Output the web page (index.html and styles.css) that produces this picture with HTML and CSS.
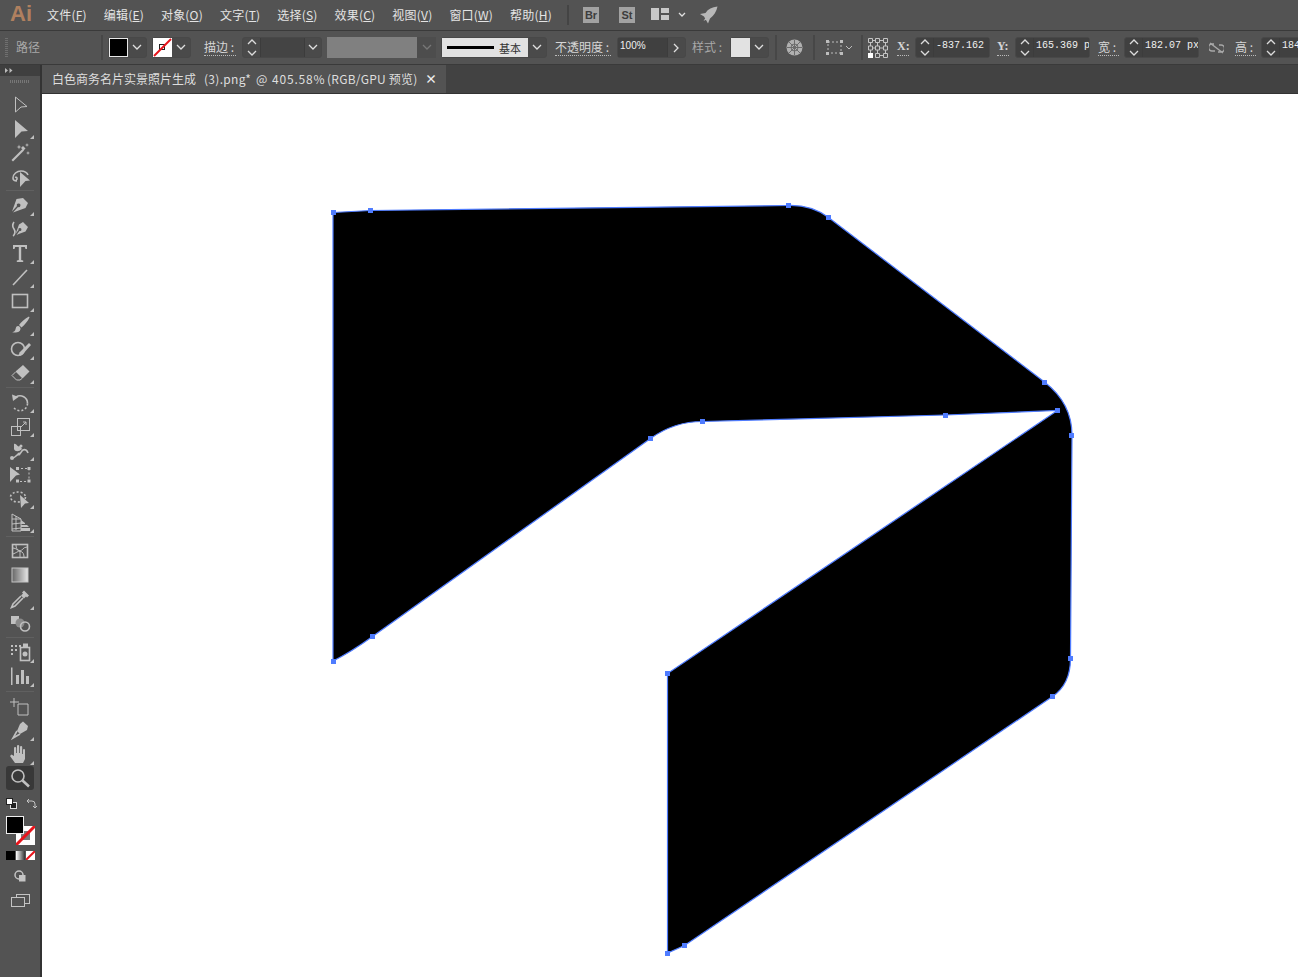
FILE: index.html
```html
<!DOCTYPE html>
<html lang="zh-CN">
<head>
    <meta charset="UTF-8">
    <title>Adobe Illustrator</title>
    <link rel="stylesheet" href="styles.css">
</head>
<body>
    <!-- menu bar -->
    <header class="menu-bar">
        <span class="app-logo">Ai</span>
        <nav class="menu-list">
            <span>文件(<u>F</u>)</span>
            <span>编辑(<u>E</u>)</span>
            <span>对象(<u>O</u>)</span>
            <span>文字(<u>T</u>)</span>
            <span>选择(<u>S</u>)</span>
            <span>效果(<u>C</u>)</span>
            <span>视图(<u>V</u>)</span>
            <span>窗口(<u>W</u>)</span>
            <span>帮助(<u>H</u>)</span>
        </nav>
        <i class="menu-divider"></i>
        <span class="bridge-btn">Br</span>
        <span class="bridge-btn stock-btn">St</span>
        <svg class="layout-icon" width="18" height="12" viewBox="0 0 18 12"><path d="M0 0h8v12H0zM10 0h8v5h-8zM10 7h8v5h-8z"/></svg>
        <svg class="chev layout-chev" width="8" height="6" viewBox="0 0 8 6"><path d="M1 1l3 3 3-3"/></svg>
        <svg class="rocket-icon" width="18" height="18" viewBox="0 0 18 18"><path d="M17.500.5C12 1 8 3 5.500 7L0 8l4 2.500L8 17.500l2-5c4-3 6.500-7 7.500-12zM6 11l-2.500 4 4-2z"/></svg>
    </header>

    <!-- control bar -->
    <section class="control-bar">
        <span class="grip"></span>
        <span class="path-label">路径</span>
        <i class="bar-divider divider-a"></i>

        <div class="combo fill-combo">
            <span class="swatch swatch-black"></span>
            <span class="combo-arrow"><svg class="chev" width="10" height="7" viewBox="0 0 10 7"><path d="M1 1l4 4 4-4"/></svg></span>
        </div>
        <div class="combo stroke-combo">
            <span class="swatch swatch-none">
                <svg width="19" height="19" viewBox="0 0 19 19"><rect x="6.500" y="6.500" width="5" height="5" fill="none" stroke="#222"/><path d="M1 18L18 1" stroke="#e8141b" stroke-width="2"/></svg>
            </span>
            <span class="combo-arrow"><svg class="chev" width="10" height="7" viewBox="0 0 10 7"><path d="M1 1l4 4 4-4"/></svg></span>
        </div>

        <span class="field-label stroke-label">描边 :</span>
        <div class="combo weight-combo">
            <span class="spinner"><svg width="10" height="17" viewBox="0 0 10 17"><path d="M1 5l4-4 4 4M1 12l4 4 4-4"/></svg></span>
            <span class="weight-value"></span>
            <span class="combo-arrow"><svg class="chev" width="10" height="7" viewBox="0 0 10 7"><path d="M1 1l4 4 4-4"/></svg></span>
        </div>

        <div class="dash-combo">
            <span class="dash-preview"></span>
            <span class="combo-arrow"><svg class="chev chev-off" width="10" height="7" viewBox="0 0 10 7"><path d="M1 1l4 4 4-4"/></svg></span>
        </div>

        <div class="combo brush-combo">
            <span class="brush-preview"><i class="brush-line"></i><em>基本</em></span>
            <span class="combo-arrow"><svg class="chev" width="10" height="7" viewBox="0 0 10 7"><path d="M1 1l4 4 4-4"/></svg></span>
        </div>

        <span class="field-label opacity-label">不透明度 :</span>
        <div class="combo opacity-combo">
            <span class="num-value opacity-value">100%</span>
            <span class="combo-arrow"><svg class="chev" width="7" height="10" viewBox="0 0 7 10"><path d="M1 1l4 4-4 4"/></svg></span>
        </div>

        <span class="style-label">样式 :</span>
        <div class="combo style-combo">
            <span class="swatch swatch-style"></span>
            <span class="combo-arrow"><svg class="chev" width="10" height="7" viewBox="0 0 10 7"><path d="M1 1l4 4 4-4"/></svg></span>
        </div>

        <i class="bar-divider divider-b"></i>
        <svg class="globe-icon" width="17" height="17" viewBox="0 0 17 17"><circle cx="8.500" cy="8.500" r="8" fill="#b0b0b0"/><path d="M8.500 1v15M1 8.500h15M3 3l11 11M14 3L3 14" stroke="#6c6c6c" stroke-width="1"/><circle cx="8.500" cy="8.500" r="3.500" fill="none" stroke="#6c6c6c"/></svg>
        <i class="bar-divider divider-c"></i>
        <svg class="transform-icon" width="28" height="15" viewBox="0 0 28 15"><path d="M2 2h13v11H2z" fill="none" stroke="#bdbdbd" stroke-dasharray="2 2"/><path d="M0 0h3v3H0zM14 0h3v3h-3zM0 12h3v3H0zM14 12h3v3h-3z" fill="#bdbdbd"/><path d="M20 6l3 3 3-3" fill="none" stroke="#bdbdbd"/></svg>
        <i class="bar-divider divider-d"></i>
        <svg class="ref-icon" width="20" height="20" viewBox="0 0 20 20" fill="none" stroke="#c4c4c4"><path d="M.5.500h4v4h-4zM7.500.500h4v4h-4zM15.500.500h4v4h-4zM.5 8h4v4h-4zM7.500 8h4v4h-4zM15.500 8h4v4h-4zM7.500 15.500h4v4h-4zM15.500 15.500h4v4h-4zM4.500 2.500h3M11.500 2.500h4M4.500 10h3M11.500 10h4M11.500 17.500h4M2.500 4.500V8M9.500 4.500V8M17.500 4.500V8M2.500 12v3M9.500 12v3.500M17.500 12v3.500"/><path d="M0 15h5v5H0z" fill="#fff" stroke="none"/></svg>

        <span class="field-label x-label">X:</span>
        <div class="combo coord-combo x-combo">
            <span class="spinner"><svg width="10" height="17" viewBox="0 0 10 17"><path d="M1 5l4-4 4 4M1 12l4 4 4-4"/></svg></span>
            <span class="num-value">-837.162</span>
        </div>
        <span class="field-label y-label">Y:</span>
        <div class="combo coord-combo y-combo">
            <span class="spinner"><svg width="10" height="17" viewBox="0 0 10 17"><path d="M1 5l4-4 4 4M1 12l4 4 4-4"/></svg></span>
            <span class="num-value">165.369 px</span>
        </div>
        <span class="field-label w-label">宽 :</span>
        <div class="combo coord-combo w-combo">
            <span class="spinner"><svg width="10" height="17" viewBox="0 0 10 17"><path d="M1 5l4-4 4 4M1 12l4 4 4-4"/></svg></span>
            <span class="num-value">182.07 px</span>
        </div>
        <svg class="link-icon" width="15" height="12" viewBox="0 0 15 12" fill="none" stroke="#a8a8a8" stroke-width="1.500"><path d="M5 2H3a2.500 2.500 0 0 0 0 7h3M10 3h2a2.500 2.500 0 0 1 0 7H9M1 1l13 10"/></svg>
        <span class="field-label h-label">高 :</span>
        <div class="combo coord-combo h-combo">
            <span class="spinner"><svg width="10" height="17" viewBox="0 0 10 17"><path d="M1 5l4-4 4 4M1 12l4 4 4-4"/></svg></span>
            <span class="num-value">184.5 px</span>
        </div>
    </section>

    <div class="workspace">
        <!-- tools panel -->
        <aside class="tools">
            <div class="tools-head"><svg width="8" height="5" viewBox="0 0 8 5"><path d="M0 0l3 2.500L0 5zM4.500 0l3 2.500-3 2.500z"/></svg></div>
            <div class="tools-grip"></div>

            <div class="tool"><svg viewBox="0 0 24 24"><path class="line" d="M7.500 5l11.500 9.500-6 .5-5.500 5z"/></svg></div>
            <div class="tool more"><svg viewBox="0 0 24 24"><path d="M7 4l13 11-6.500.5L7 22z"/></svg></div>
            <div class="tool"><svg viewBox="0 0 24 24"><path d="M5 21.500l-1.500-1.500 11-11 1.500 1.500z"/><path d="M11 4.500l.6 1.900 1.900.6-1.900.6-.6 1.900-.6-1.900-1.900-.6 1.900-.6zM19 3l.5 1.500 1.500.5-1.500.5-.5 1.500-.5-1.500-1.500-.5 1.500-.5zM20 11l.5 1.500 1.500.5-1.500.5-.5 1.500-.5-1.500-1.500-.5 1.500-.5z"/><path d="M15 6l2.500 2.500-2 2L13 8z"/></svg></div>
            <div class="tool"><svg viewBox="0 0 24 24"><path class="line thick" d="M9 17c-2 0-4-1-4-3 0-4 4-7 8-7 3.500 0 6 1.500 7 4M7 13.500c2-1 3 1.500 1 2.500"/><path d="M12 8l10 8.500-4.500.5-5.500 6z"/></svg></div>
            <i class="tool-sep"></i>

            <div class="tool more"><svg viewBox="0 0 24 24"><path d="M15 5l5 5-2.500 5-7 2.500-5.500 2 5-5.500a1.800 1.800 0 1 0-1-1L4 18.500l2-5.500 2.500-7z"/></svg></div>
            <div class="tool"><svg viewBox="0 0 24 24"><path d="M15 5l5 5-2.500 4.500-5.500 2-3.500 1.500 3-4a1.500 1.500 0 1 0-1-1l-3 4 1.500-4 2-5.500z"/><path class="line thick" d="M6 5c-2 3-1.500 5 0 7s1 6-1 7"/></svg></div>
            <div class="tool more"><svg viewBox="0 0 24 24"><path d="M5 4h14v4h-1.500l-.7-2H13.200v13l2 .6V21H8.800v-1.400l2-.6V6H7.200l-.7 2H5z"/></svg></div>
            <div class="tool more"><svg viewBox="0 0 24 24"><path class="line thick" d="M5 20L19 5"/></svg></div>
            <div class="tool more"><svg viewBox="0 0 24 24"><rect class="line thick" x="4.500" y="5.500" width="15" height="13" fill="#6a6a6a"/></svg></div>
            <div class="tool more"><svg viewBox="0 0 24 24"><path d="M21 3.500c-4 2-8 5.500-10 8.500l2.500 2.500c3-2.500 6-6 8-10zM10 13c-2.500 0-2 3-3 4.500-.6 1-2 1.500-3 1.500 3 1 8 1 8.500-3 .2-1.500-1-3-2.500-3z"/></svg></div>
            <div class="tool more"><svg viewBox="0 0 24 24"><circle class="line thick" cx="10" cy="12" r="6.500"/><path d="M21 6l2 2-9 10-3.500 1 1-3.500z"/></svg></div>
            <div class="tool more"><svg viewBox="0 0 24 24"><path d="M15 4l6.500 6.500-7 7-7-7z"/><path class="line" d="M7.500 11l-3.500 3.500 4.500 4.500h3.500l2-1.500"/></svg></div>
            <i class="tool-sep"></i>

            <div class="tool more"><svg viewBox="0 0 24 24"><path class="line thick dashed" d="M19.500 13.500a7.500 7.500 0 0 1-14 3.500"/><path class="line thick" d="M19.500 13.500A7.500 7.500 0 0 0 8 7"/><path d="M4 4.500l6.500 2.500-5.500 4z"/></svg></div>
            <div class="tool more"><svg viewBox="0 0 24 24"><rect class="line" x="3.500" y="12.500" width="9" height="9"/><rect class="line" x="9.500" y="4.500" width="12" height="12"/><path class="line" d="M13 13l5-5M15 8h3v3"/></svg></div>
            <div class="tool more"><svg viewBox="0 0 24 24"><path class="line thick" d="M5 20c3-1 3-3 6-4 3-1 2-3 4-4s4 0 5 3"/><path d="M6 6c3-1 3 4 6 2l2 3c-3 3-7 3-8 0z"/><circle cx="4" cy="20" r="2"/><circle cx="13" cy="8" r="1.500"/><circle cx="11" cy="16" r="1.500"/></svg></div>
            <div class="tool"><svg viewBox="0 0 24 24"><path d="M2 5l10 7.500-4 1L2 20z"/><path class="line dashed" d="M9 6.500h12v13H7"/><path d="M8 5h3v3H8zM19.500 5h3v3h-3zM19.500 17.500h3v3h-3zM8 17.500h3v3H8z"/></svg></div>
            <div class="tool more"><svg viewBox="0 0 24 24"><ellipse class="line thick dashed" cx="10" cy="11" rx="7.500" ry="5"/><path d="M12 9l9 8-4 .5-4 4.500z"/></svg></div>
            <div class="tool more"><svg viewBox="0 0 24 24"><path class="line" d="M4 21V4l9 5v12zM4 9h9M4 14l9-1M4 19l9-1M8 6v14"/><path d="M13 10l4 3v1h-4zM13 15h6l2 2h-8zM13 18h9v3h-9z"/></svg></div>
            <i class="tool-sep"></i>

            <div class="tool"><svg viewBox="0 0 24 24"><rect class="line thick" x="4.500" y="5.500" width="15" height="13"/><path class="line" d="M5 9c3 0 5 3 7 3s3-4 7-4M12 12v6M8 6c0 3 1 5 4 6M16 18c0-3-1-5-4-6M5 15c3-1 5-3 7-3"/></svg></div>
            <div class="tool"><svg viewBox="0 0 24 24"><defs><linearGradient id="grad-tool"><stop offset="0" stop-color="#666"/><stop offset="1" stop-color="#e6e6e6"/></linearGradient></defs><rect x="4" y="5" width="16" height="14" fill="url(#grad-tool)" stroke="#c4c4c4"/></svg></div>
            <div class="tool more"><svg viewBox="0 0 24 24"><path d="M16 3.500l5 5-2 2-1-1-2 2-3-3 2-2-1-1z"/><path class="line thick" d="M13 9l-8 8-1.500 3.500L7 19l8-8"/></svg></div>
            <div class="tool"><svg viewBox="0 0 24 24"><rect x="3" y="5" width="8" height="8"/><circle cx="12" cy="12" r="4.500" fill="#8a8a8a"/><circle class="line thick" cx="17" cy="15.500" r="4.500" fill="#535353"/></svg></div>
            <i class="tool-sep"></i>

            <div class="tool more"><svg viewBox="0 0 24 24"><path d="M3 5h2v2H3zM7 5h2v2H7zM11 5h2v2h-2zM3 9h2v2H3zM7 9h2v2H7zM3 13h2v2H3zM15 3.500h5V7h-5z"/><rect class="line thick" x="12.500" y="7.500" width="9" height="13"/><circle cx="17" cy="14" r="2.500"/></svg></div>
            <div class="tool more"><svg viewBox="0 0 24 24"><path d="M3 3.500h1.500V21H3zM8 11h3v9H8zM13 6h3v14h-3zM18 12h3v8h-3z"/></svg></div>
            <i class="tool-sep tool-sep-wide"></i>

            <div class="tool"><svg viewBox="0 0 24 24"><path d="M10 10h10v11H10z" fill="none" stroke="#c0c0c0"/><path class="line" d="M6 4v9M2 8h9"/></svg></div>
            <div class="tool more"><svg viewBox="0 0 24 24"><path d="M15 3.500l5 4.500-1 4-7 4-3-3 3-7z"/><path class="line thick" d="M9 13l-4 7 7-4"/></svg></div>
            <div class="tool more"><svg viewBox="0 0 24 24"><path d="M7 21l-5-7 1.500-1.500L6 14V6a1 1 0 0 1 2.200 0v5h.8V4a1 1 0 0 1 2.200 0v7h.8V5a1 1 0 0 1 2.200 0v7h.8V8a1 1 0 0 1 2 0v9l-2 4z"/></svg></div>
            <div class="tool tool-active"><svg viewBox="0 0 24 24"><circle class="line thick" cx="10" cy="10" r="6"/><path class="line heavy" d="M14.500 14.500L21 20.500"/></svg></div>

            <!-- fill and stroke -->
            <div class="color-tools">
                <div class="default-row">
                    <svg width="11" height="11" viewBox="0 0 11 11"><rect x="4.500" y="4.500" width="6" height="6" fill="#222" stroke="#ddd"/><rect x=".5" y=".5" width="6" height="6" fill="#fff" stroke="#222"/></svg>
                    <svg width="11" height="11" viewBox="0 0 11 11" fill="none" stroke="#c4c4c4"><path d="M1 3h5a3 3 0 0 1 3 3v4M3 1L1 3l2 2M7 8l2 2 2-2"/></svg>
                </div>
                <div class="fill-stroke">
                    <span class="big-stroke"><svg width="19" height="19" viewBox="0 0 19 19"><path d="M5 5h9v9H5z" fill="#7a7a7a"/><path d="M0 19L19 0" stroke="#e8141b" stroke-width="3"/></svg></span>
                    <span class="big-fill"></span>
                </div>
                <div class="mode-row">
                    <span class="mode mode-color"></span>
                    <span class="mode mode-grad"></span>
                    <span class="mode mode-none"><svg width="9" height="9" viewBox="0 0 9 9"><path d="M0 9l9-9" stroke="#e8141b" stroke-width="2"/></svg></span>
                </div>
                <svg class="draw-mode" width="12" height="12" viewBox="0 0 12 12"><circle cx="5" cy="5" r="4" fill="none" stroke="#c4c4c4" stroke-width="1.500"/><rect x="5" y="5" width="6.500" height="6.500" fill="#c4c4c4"/></svg>
                <svg class="screen-mode" width="19" height="13" viewBox="0 0 19 13" fill="#535353" stroke="#c4c4c4"><rect x="5.500" y=".5" width="13" height="9"/><rect x=".5" y="3.500" width="13" height="9"/></svg>
            </div>
        </aside>

        <main class="doc-area">
            <div class="tab-bar">
                <div class="doc-tab">
                    <span class="tab-name">白色商务名片实景照片生成</span>
                    <span class="tab-file">(3).png*</span>
                    <span class="tab-at">@</span>
                    <span class="tab-zoom">405.58%</span>
                    <span class="tab-mode">(RGB/GPU 预览)</span>
                    <b class="tab-close">×</b>
                </div>
            </div>
            <div class="canvas">
                <svg class="artboard" viewBox="42 94 1256 883">
                    <path class="shape" d="M333 212.500L370.500 210.500L788.500 205.500C805 205 817 209 828.500 217.500L1044.500 382C1060 394 1072 410 1072 435L1070.500 658.500C1070.500 675 1065 688 1052.500 696.500L684.500 945.500L667.500 953V673.500L1057.500 410.500L945.500 415L702.500 421.500C685 421.500 668 426 650.500 438.500L372.500 636.500C358 647 345 655 333 661Z"/>
                    <g class="anchors">
                        <rect x="331" y="210" width="5" height="5"/>
                        <rect x="368" y="208" width="5" height="5"/>
                        <rect x="786" y="203" width="5" height="5"/>
                        <rect x="826" y="215" width="5" height="5"/>
                        <rect x="1042" y="380" width="5" height="5"/>
                        <rect x="1055" y="408" width="5" height="5"/>
                        <rect x="1069" y="433" width="5" height="5"/>
                        <rect x="1068" y="656" width="5" height="5"/>
                        <rect x="1050" y="694" width="5" height="5"/>
                        <rect x="682" y="943" width="5" height="5"/>
                        <rect x="665" y="951" width="5" height="5"/>
                        <rect x="665" y="671" width="5" height="5"/>
                        <rect x="943" y="413" width="5" height="5"/>
                        <rect x="700" y="419" width="5" height="5"/>
                        <rect x="648" y="436" width="5" height="5"/>
                        <rect x="370" y="634" width="5" height="5"/>
                        <rect x="331" y="659" width="5" height="5"/>
                    </g>
                </svg>
            </div>
        </main>
    </div>
</body>
</html>
```

FILE: styles.css
```css
* {
    margin: 0;
    padding: 0;
    box-sizing: border-box;
}

html, body {
    height: 100%;
    overflow: hidden;
}

body {
    display: flex;
    flex-direction: column;
    font-family: "Noto Sans CJK SC", "Open Sans", sans-serif;
    font-size: 12px;
    background-color: #535353;
    color: #e4e4e4;
}

i, em {
    font-style: normal;
}

svg {
    display: block;
    flex-shrink: 0;
}

/* Menu bar */
.menu-bar {
    display: flex;
    align-items: center;
    height: 31px;
    flex-shrink: 0;
    padding-left: 10px;
    border-bottom: 1px solid #3a3a3a;
}

.app-logo {
    width: 37px;
    font-family: "Liberation Sans", sans-serif;
    font-size: 22px;
    font-weight: bold;
    color: #b0805f;
    margin-top: -2px;
}

.menu-list {
    display: flex;
    gap: 17px;
    width: 520px;
    margin-top: -2px;
}

.menu-list span {
    white-space: nowrap;
    letter-spacing: .2px;
}

.menu-divider {
    width: 2px;
    height: 20px;
    background-color: #444;
}

.bridge-btn {
    width: 16px;
    height: 16px;
    margin-left: 14px;
    background-color: #a2a2a2;
    color: #3d3d3d;
    font-family: "Liberation Sans", sans-serif;
    font-size: 11px;
    font-weight: bold;
    line-height: 17px;
    text-align: center;
}

.stock-btn {
    margin-left: 20px;
}

.layout-icon {
    margin: -2px 0 0 16px;
    fill: #c8c8c8;
}

.chev {
    fill: none;
    stroke: #e0e0e0;
    stroke-width: 1.3;
}

.chev-off {
    stroke: #777;
}

.layout-chev {
    margin-left: 9px;
}

.rocket-icon {
    margin-left: 14px;
    fill: #b8b8b8;
}

/* Control bar */
.control-bar {
    display: flex;
    align-items: center;
    height: 34px;
    flex-shrink: 0;
    padding-left: 5px;
    overflow: hidden;
    white-space: nowrap;
    border-bottom: 1px solid #3a3a3a;
}

.control-bar > * {
    flex-shrink: 0;
}

.grip {
    width: 3px;
    height: 19px;
    background: repeating-linear-gradient(#6f6f6f 0 1px, transparent 1px 2px);
}

.path-label {
    margin: -3px 0 0 8px;
    color: #a8a8a8;
}

.bar-divider {
    width: 2px;
    height: 25px;
    background-color: #474747;
}

.divider-a { margin-left: 61px; }
.divider-b { margin-left: 6px; }
.divider-c { margin-left: 10px; }
.divider-d { margin-left: 7px; }

.combo {
    display: flex;
    align-items: center;
    height: 21px;
    border: 1px solid #484848;
    border-radius: 3px;
    background-color: #4a4a4a;
}

.combo-arrow {
    display: flex;
    align-items: center;
    justify-content: center;
    flex: 1;
    height: 100%;
}

.swatch {
    display: block;
    width: 19px;
    height: 19px;
    flex-shrink: 0;
    border: 1px solid #e8e8e8;
}

.swatch-black { background-color: #000; }
.swatch-none { background-color: #fff; border: 0; }
.swatch-style { background-color: #e2e2e2; border: 0; }

.fill-combo {
    width: 39px;
    margin-left: 5px;
}

.stroke-combo {
    width: 39px;
    margin-left: 5px;
}

.field-label {
    margin-top: -1px;
    padding-bottom: 1px;
    border-bottom: 1px dotted #bbb;
    color: #d6d6d6;
    line-height: 15px;
}

.stroke-label {
    width: 32px;
    margin-left: 13px;
}

.weight-combo {
    width: 80px;
    margin-left: 6px;
}

.spinner {
    display: flex;
    align-items: center;
    justify-content: center;
    width: 18px;
    height: 100%;
    flex-shrink: 0;
    border-right: 1px solid #3c3c3c;
}

.spinner path {
    fill: none;
    stroke: #dcdcdc;
    stroke-width: 1.3;
}

.weight-value {
    width: 44px;
    height: 100%;
    background-color: #444;
    border-right: 1px solid #3c3c3c;
}

.dash-combo {
    display: flex;
    align-items: center;
    width: 109px;
    height: 21px;
    margin-left: 5px;
    background-color: #4d4d4d;
}

.dash-preview {
    width: 90px;
    height: 100%;
    background-color: #808080;
}

.brush-combo {
    width: 106px;
    margin-left: 5px;
}

.brush-preview {
    display: flex;
    align-items: center;
    width: 86px;
    height: 19px;
    flex-shrink: 0;
    padding-left: 5px;
    background-color: #e2e2e2;
    color: #333;
    font-size: 11px;
}

.brush-line {
    width: 47px;
    height: 3px;
    margin-right: 5px;
    background-color: #000;
}

.opacity-label {
    width: 56px;
    margin-left: 8px;
}

.opacity-combo {
    width: 69px;
    margin-left: 6px;
}

.num-value {
    display: block;
    flex-shrink: 0;
    overflow: hidden;
    height: 100%;
    padding-left: 2px;
    background-color: #404040;
    color: #f0f0f0;
    font-family: "Liberation Mono", monospace;
    font-size: 10px;
    line-height: 16px;
}

.opacity-value {
    width: 50px;
    font-family: "Liberation Sans", sans-serif;
    border-right: 1px solid #3c3c3c;
}

.style-label {
    width: 32px;
    margin: -2px 0 0 6px;
    color: #a8a8a8;
}

.style-combo {
    width: 39px;
    margin-left: 6px;
}

.globe-icon {
    margin-left: 9px;
}

.transform-icon {
    margin-left: 11px;
}

.ref-icon {
    margin-left: 5px;
}

.x-label {
    width: 12px;
    margin-left: 9px;
    font-family: "Liberation Serif", serif;
    font-weight: bold;
}

.y-label {
    width: 12px;
    margin-left: 7px;
    font-family: "Liberation Serif", serif;
    font-weight: bold;
}

.w-label, .h-label {
    width: 21px;
    margin-left: 8px;
}

.coord-combo {
    background-color: #404040;
}

.coord-combo .num-value {
    flex: 1;
    min-width: 0;
}

.x-combo, .y-combo {
    width: 75px;
    margin-left: 6px;
}

.w-combo {
    width: 75px;
    margin-left: 5px;
}

.h-combo {
    width: 75px;
    margin-left: 5px;
}

.link-icon {
    margin-left: 10px;
}

.h-label {
    margin-left: 11px;
}

/* Tools panel and document area */
.workspace {
    display: flex;
    flex: 1;
    min-height: 0;
}

.tools {
    display: flex;
    flex-direction: column;
    width: 42px;
    flex-shrink: 0;
    border-right: 2px solid #333;
}

.tools-head {
    display: flex;
    align-items: center;
    height: 11px;
    padding-left: 5px;
    background-color: #3f3f3f;
    fill: #bbb;
}

.tools-grip {
    width: 20px;
    height: 16px;
    margin: 0 0 0 10px;
    background: repeating-linear-gradient(90deg, #777 0 1px, transparent 1px 2px) center 4px / 100% 3px no-repeat;
}

.tool {
    position: relative;
    display: flex;
    justify-content: center;
    align-items: center;
    width: 28px;
    height: 24px;
    margin-left: 6px;
    flex-shrink: 0;
}

.tool svg {
    width: 24px;
    height: 24px;
    fill: #c0c0c0;
}

.tool .line {
    fill: none;
    stroke: #c0c0c0;
    stroke-width: 1;
}

.tool .thick {
    stroke-width: 1.6;
}

.tool .heavy {
    stroke-width: 2.6;
}

.tool .dashed {
    stroke-dasharray: 2 2;
}

.tool.more::after {
    content: '';
    position: absolute;
    right: 0;
    bottom: 1px;
    border-style: solid;
    border-width: 0 0 4px 4px;
    border-color: transparent transparent #c0c0c0 transparent;
}

.tool-active {
    border-radius: 3px;
    background-color: #383838;
}

.tool-sep {
    height: 1px;
    margin: 2px 6px;
    flex-shrink: 0;
    background-color: #606060;
}

.tool-sep-wide {
    margin: 3px 6px 2px;
}

.color-tools {
    display: flex;
    flex-direction: column;
    padding: 8px 0 0 6px;
}

.default-row {
    display: flex;
    gap: 9px;
}

.fill-stroke {
    position: relative;
    width: 29px;
    height: 29px;
    margin-top: 7px;
}

.big-fill {
    position: absolute;
    left: 0;
    top: 0;
    width: 18px;
    height: 18px;
    border: 1px solid #eee;
    background-color: #000;
}

.big-stroke {
    position: absolute;
    right: 0;
    bottom: 0;
    width: 19px;
    height: 19px;
    background-color: #fff;
}

.mode-row {
    display: flex;
    gap: 1px;
    margin-top: 6px;
}

.mode {
    width: 9px;
    height: 9px;
}

.mode-color { background-color: #000; }
.mode-grad { background: linear-gradient(90deg, #fff, #333); }
.mode-none { background-color: #fff; }

.draw-mode {
    margin: 10px 0 0 8px;
}

.screen-mode {
    margin: 12px 0 0 5px;
}

.doc-area {
    display: flex;
    flex-direction: column;
    flex: 1;
    min-width: 0;
}

.tab-bar {
    height: 29px;
    flex-shrink: 0;
    background-color: #424242;
    border-bottom: 1px solid #333;
}

.doc-tab {
    display: flex;
    align-items: center;
    width: 404px;
    height: 28px;
    padding: 0 0 2px 10px;
    background-color: #535353;
    color: #dedede;
    white-space: nowrap;
}

.tab-file {
    width: 46px;
    margin-left: 8px;
    letter-spacing: .3px;
}

.tab-at {
    margin-left: 6px;
    width: 12px;
}

.tab-zoom {
    width: 49px;
    margin-left: 4px;
    letter-spacing: .8px;
}

.tab-mode {
    margin-left: 6px;
    letter-spacing: .25px;
}

.tab-close {
    margin-left: auto;
    margin-right: 9px;
    font-size: 12px;
    color: #eee;
}

.canvas {
    flex: 1;
    min-height: 0;
    background-color: #fff;
}

.artboard {
    width: 1256px;
    height: 883px;
}

.shape {
    fill: #000;
    stroke: #4f7cff;
    stroke-width: 1.2;
}

.anchors rect {
    fill: #4f7cff;
}
```
